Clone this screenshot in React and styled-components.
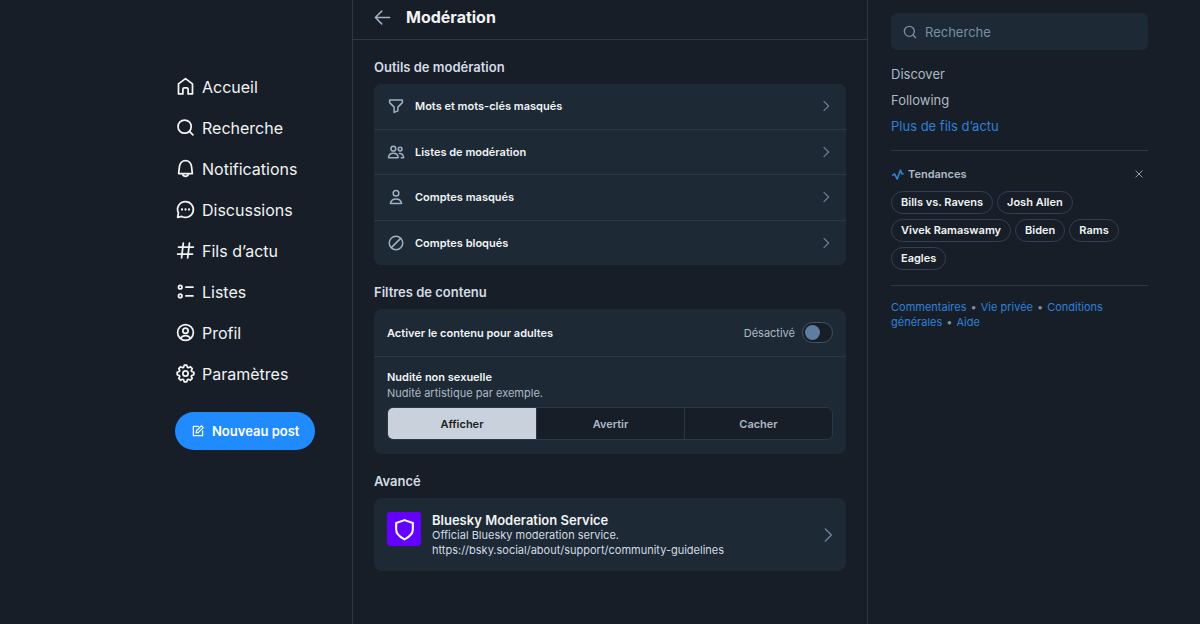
import React, { useState } from "react";
import styled, { createGlobalStyle, ThemeProvider } from "styled-components";

const theme = {
  bg: "#171e27",
  card: "#1d2934",
  line: "#2b3847",
  text: "#f1f3f5",
  textHigh: "#d3dbe5",
  textMedium: "#aeb9c6",
  textLow: "#788ea5",
  icon: "#9fb0c2",
  chevron: "#6b7f95",
  primary: "#208bfe",
  link: "#2f80d8",
};

const GlobalStyle = createGlobalStyle`
  *, *::before, *::after { box-sizing: border-box; }
  body {
    margin: 0;
    background: ${theme.bg};
    color: ${theme.text};
    font-family: Inter, "Liberation Sans", sans-serif;
    font-size: 13px;
  }
  a { color: inherit; text-decoration: none; }
  button, input { font: inherit; color: inherit; }
  h1, h2, h3, p { margin: 0; }
`;

/* ---------- icons ---------- */

const Svg = styled.svg`
  display: block;
  flex: none;
  width: ${(p) => p.$size}px;
  height: ${(p) => p.$size}px;
  fill: none;
  stroke: currentColor;
  stroke-width: ${(p) => p.$weight || 2};
  stroke-linejoin: round;
  stroke-linecap: round;
`;

const shapes = {
  home: <path d="M4 9 12 3l8 6V20.500h-5V15a1.500 1.500 0 0 0-1.500-1.500h-3A1.500 1.500 0 0 0 9 15v5.500H4Z" />,
  search: (
    <>
      <circle cx="11" cy="11" r="7.500" />
      <path d="m16.500 16.500 4 4" />
    </>
  ),
  bell: (
    <>
      <path d="M4.200 17.800 5 10.400C5.400 6 8.300 3 12 3s6.600 3 7 7.400l.8 7.400Z" />
      <path d="M8.500 18.300c.6 1.700 1.900 2.600 3.500 2.600s2.900-.9 3.500-2.600" />
    </>
  ),
  chat: (
    <>
      <path d="M12 3a9 9 0 1 1-4.300 16.900L3 21l.9-5A9 9 0 0 1 12 3Z" />
      <g fill="currentColor" stroke="none">
        <circle cx="8" cy="12" r="1.300" />
        <circle cx="12" cy="12" r="1.300" />
        <circle cx="16" cy="12" r="1.300" />
      </g>
    </>
  ),
  hash: <path d="M9.500 3.500 7.500 20.500M16.500 3.500l-2 17M4 8h17M3 16h17" />,
  list: (
    <>
      <circle cx="6" cy="7" r="2" />
      <circle cx="6" cy="17" r="2" />
      <path d="M12.500 7H20.500M12.500 17H20.500" />
    </>
  ),
  profile: (
    <>
      <circle cx="12" cy="12" r="9" />
      <circle cx="12" cy="10" r="3" />
      <path d="M6.500 18.500c1.200-2 3.100-3 5.500-3s4.300 1 5.500 3" />
    </>
  ),
  gear: (
    <>
      <path d="M10.600 2.500h2.800l.9 2.500 1 .4 2.400-1.100 2 2-1.100 2.400.4 1 2.500.9v2.800l-2.500.9-.4 1 1.100 2.400-2 2-2.400-1.100-1 .4-.9 2.500h-2.800l-.9-2.500-1-.4-2.400 1.100-2-2 1.100-2.400-.4-1-2.500-.9v-2.800l2.500-.9.4-1-1.100-2.400 2-2 2.400 1.100 1-.4Z" />
      <circle cx="12" cy="12" r="3" />
    </>
  ),
  compose: (
    <>
      <path d="M12.500 4H4v16h16v-8.500" />
      <path d="M17.800 3 21 6.200 12.400 14.800 8.700 15.300 9.200 11.600Z" />
    </>
  ),
  back: <path d="M21 12H3.500M11 4l-8 8 8 8" />,
  filter: <path d="M3.500 4h17v3.500L14.500 13.500V18.500L9.500 20.500V13.500L3.500 7.500Z" />,
  people: (
    <>
      <circle cx="8.500" cy="7.500" r="3.200" />
      <circle cx="17.500" cy="8" r="2.500" />
      <path d="M2 19.500c.3-4 2.900-6 6.500-6s6.200 2 6.500 6Z" />
      <path d="M16.500 14c3-.3 5.200 1.600 5.800 5.500H19" />
    </>
  ),
  person: (
    <>
      <circle cx="12" cy="7" r="3.800" />
      <path d="M4.500 20.500c.7-4 3.500-6 7.500-6s6.800 2 7.500 6Z" />
    </>
  ),
  block: (
    <>
      <circle cx="12" cy="12" r="9" />
      <path d="m5.800 18.200 12.400-12.400" />
    </>
  ),
  chevron: <path d="m8.500 4 8 8-8 8" />,
  close: <path d="m4.500 4.500 15 15M19.500 4.500l-15 15" />,
  trend: <path d="M3 13.200 6.800 11.200 11.500 20.500 17.300 4l2.900 7 1.800-.5" />,
  shield: <path d="M12 3 20 5.800V12c0 4.500-3 7-8 9.500C7 19 4 16.500 4 12V5.800Z" />,
};

const Icon = ({ name, size, weight }) => (
  <Svg viewBox="0 0 24 24" $size={size} $weight={weight} aria-hidden="true">
    {shapes[name]}
  </Svg>
);

/* ---------- page frame ---------- */

const Page = styled.div`
  display: grid;
  grid-template-columns: 1fr minmax(0, 516px) 1fr;
  min-height: 100vh;
  padding-left: 20px;
`;

const Sidebar = styled.nav`
  justify-self: end;
  width: 177px;
  padding-top: 66px;
`;

const NavLink = styled.a`
  display: flex;
  align-items: center;
  gap: 6px;
  height: 41px;
  font-size: 16px;
  line-height: 20px;
`;

const ComposeButton = styled.button`
  display: flex;
  align-items: center;
  gap: 7px;
  height: 38px;
  margin-top: 18px;
  padding: 0 16px;
  border: 0;
  border-radius: 19px;
  background: ${(p) => p.theme.primary};
  color: #fff;
  font-size: 13px;
  font-weight: 600;
`;

const Main = styled.main`
  border: solid ${(p) => p.theme.line};
  border-width: 0 1px;
`;

const Header = styled.header`
  display: flex;
  align-items: center;
  gap: 14px;
  padding: 6px 20px 10px;
  border-bottom: 1px solid ${(p) => p.theme.line};
`;

const BackButton = styled.button`
  display: flex;
  padding: 0;
  border: 0;
  background: none;
  color: ${(p) => p.theme.icon};
`;

const Title = styled.h1`
  font-size: 16px;
  font-weight: 700;
  line-height: 23px;
`;

const Content = styled.div`
  display: flex;
  flex-direction: column;
  gap: 18px;
  padding: 18px 21px;
`;

const SectionTitle = styled.h2`
  margin-bottom: 7px;
  color: ${(p) => p.theme.textHigh};
  font-size: 13px;
  font-weight: 600;
  line-height: 19px;
`;

const Card = styled.div`
  overflow: hidden;
  border-radius: 8px;
  background: ${(p) => p.theme.card};
`;

const ToolList = styled(Card)`
  display: grid;
  grid-auto-rows: 1fr;
  gap: 1px;
  min-height: 181px;
  background: ${(p) => p.theme.line};
`;

const ToolRow = styled.a`
  display: flex;
  align-items: center;
  gap: 10px;
  padding: 0 13px;
  background: ${(p) => p.theme.card};
  color: ${(p) => p.theme.icon};
`;

const RowLabel = styled.span`
  flex: 1;
  display: block;
  color: ${(p) => p.theme.text};
  font-size: 11px;
  font-weight: 600;
  line-height: 16px;
`;

const Chevron = styled.span`
  color: ${(p) => p.theme.chevron};
`;

const AdultRow = styled.label`
  display: flex;
  align-items: center;
  gap: 7px;
  padding: 13px;
  border-bottom: 1px solid ${(p) => p.theme.line};
`;

const State = styled.span`
  color: ${(p) => p.theme.textMedium};
  font-size: 11px;
  line-height: 16px;
`;

const Switch = styled.input`
  appearance: none;
  display: flex;
  align-items: center;
  width: 31px;
  height: 21px;
  margin: 0;
  padding: 0 2px;
  border: 1px solid #435367;
  border-radius: 11px;
  background: ${(p) => p.theme.bg};

  &::before {
    content: "";
    width: 15px;
    height: 15px;
    border-radius: 50%;
    background: #5f7d9f;
  }

  &:checked {
    justify-content: flex-end;
  }
`;

const NudityBlock = styled.fieldset`
  margin: 0;
  padding: 12px 13px 14px;
  border: 0;
`;

const Hint = styled.p`
  margin-bottom: 6px;
  color: ${(p) => p.theme.textMedium};
  font-size: 11px;
  line-height: 16px;
`;

const Segments = styled.div`
  display: grid;
  grid-template-columns: repeat(3, 1fr);
  overflow: hidden;
  border: 1px solid ${(p) => p.theme.line};
  border-radius: 6px;
  background: ${(p) => p.theme.bg};
`;

const Segment = styled.label`
  display: grid;
  place-items: center;
  height: 31px;
  color: ${(p) => p.theme.textMedium};
  font-size: 11px;
  font-weight: 600;

  & + & {
    border-left: 1px solid ${(p) => p.theme.line};
  }

  &:has(input:checked) {
    background: #c9d1dc;
    color: ${(p) => p.theme.bg};
  }

  input {
    appearance: none;
    position: absolute;
    margin: 0;
  }
`;

const Service = styled.a`
  display: flex;
  align-items: center;
  gap: 11px;
  padding: 14px 9px 13px 13px;
`;

const ServiceLogo = styled.span`
  display: grid;
  place-items: center;
  align-self: flex-start;
  width: 34px;
  height: 34px;
  border-radius: 3px;
  background: #6400ff;
  color: #fff;
`;

const ServiceText = styled.div`
  flex: 1;
  color: ${(p) => p.theme.textHigh};
  font-size: 11px;
  line-height: 15px;
`;

const ServiceName = styled.h3`
  color: ${(p) => p.theme.text};
  font-size: 13px;
  font-weight: 600;
  line-height: 16px;
`;

/* ---------- right column ---------- */

const Aside = styled.aside`
  width: 280px;
  padding: 13px 0 0 23px;
`;

const SearchBox = styled.label`
  display: flex;
  align-items: center;
  gap: 7px;
  height: 37px;
  padding: 0 11px;
  border-radius: 6px;
  background: ${(p) => p.theme.card};
  color: ${(p) => p.theme.textLow};
`;

const SearchInput = styled.input`
  flex: 1;
  min-width: 0;
  padding: 0;
  border: 0;
  outline: 0;
  background: none;
  font-size: 13px;

  &::placeholder {
    color: ${(p) => p.theme.textLow};
    opacity: 1;
  }
`;

const Feeds = styled.div`
  display: flex;
  flex-direction: column;
  align-items: flex-start;
  gap: 10px;
  padding: 16px 0;
  border-bottom: 1px solid ${(p) => p.theme.line};
`;

const FeedLink = styled.a`
  color: ${(p) => (p.$accent ? p.theme.link : p.theme.textMedium)};
  font-size: 13px;
  line-height: 16px;
`;

const Trends = styled.section`
  padding: 14px 0 15px;
  border-bottom: 1px solid ${(p) => p.theme.line};
`;

const TrendsHead = styled.div`
  display: flex;
  align-items: center;
  gap: 4px;
  margin-bottom: 8px;
  color: ${(p) => p.theme.link};
`;

const TrendsTitle = styled.h2`
  flex: 1;
  color: ${(p) => p.theme.textMedium};
  font-size: 11px;
  font-weight: 600;
  line-height: 18px;
`;

const CloseButton = styled.button`
  display: flex;
  padding: 4px;
  border: 0;
  background: none;
  color: ${(p) => p.theme.textMedium};
`;

const Chips = styled.div`
  display: flex;
  flex-wrap: wrap;
  gap: 5px 4px;
`;

const Chip = styled.a`
  padding: 0 9px;
  border: 1px solid #314052;
  border-radius: 12px;
  font-size: 11px;
  font-weight: 600;
  line-height: 21px;
`;

const Footer = styled.footer`
  padding-top: 14px;
  color: ${(p) => p.theme.textLow};
  font-size: 11px;
  line-height: 15px;

  a {
    color: ${(p) => p.theme.link};
  }
`;

const Dot = styled.span`
  margin: 0 4px;
`;

const navItems = [
  ["home", "Accueil"],
  ["search", "Recherche"],
  ["bell", "Notifications"],
  ["chat", "Discussions"],
  ["hash", "Fils d’actu"],
  ["list", "Listes"],
  ["profile", "Profil"],
  ["gear", "Paramètres"],
];

const tools = [
  ["filter", "Mots et mots-clés masqués"],
  ["people", "Listes de modération"],
  ["person", "Comptes masqués"],
  ["block", "Comptes bloqués"],
];

const topics = ["Bills vs. Ravens", "Josh Allen", "Vivek Ramaswamy", "Biden", "Rams", "Eagles"];

const footerLinks = ["Commentaires", "Vie privée", "Conditions générales", "Aide"];

export default function App() {
  const [adult, setAdult] = useState(false);
  const [nudity, setNudity] = useState("Afficher");

  return (
    <ThemeProvider theme={theme}>
      <GlobalStyle />
      <Page>
        <Sidebar>
          {navItems.map(([icon, label]) => (
            <NavLink href="#" key={label}>
              <Icon name={icon} size={21} />
              {label}
            </NavLink>
          ))}
          <ComposeButton type="button">
            <Icon name="compose" size={14} />
            Nouveau post
          </ComposeButton>
        </Sidebar>

        <Main>
          <Header>
            <BackButton type="button" aria-label="Retour">
              <Icon name="back" size={19} />
            </BackButton>
            <Title>Modération</Title>
          </Header>
          <Content>
            <section>
              <SectionTitle>Outils de modération</SectionTitle>
              <ToolList>
                {tools.map(([icon, label]) => (
                  <ToolRow href="#" key={label}>
                    <Icon name={icon} size={18} />
                    <RowLabel>{label}</RowLabel>
                    <Chevron>
                      <Icon name="chevron" size={14} />
                    </Chevron>
                  </ToolRow>
                ))}
              </ToolList>
            </section>

            <section>
              <SectionTitle>Filtres de contenu</SectionTitle>
              <Card>
                <AdultRow>
                  <RowLabel>Activer le contenu pour adultes</RowLabel>
                  <State>{adult ? "Activé" : "Désactivé"}</State>
                  <Switch
                    type="checkbox"
                    role="switch"
                    checked={adult}
                    onChange={(e) => setAdult(e.target.checked)}
                  />
                </AdultRow>
                <NudityBlock aria-label="Nudité non sexuelle">
                  <RowLabel>Nudité non sexuelle</RowLabel>
                  <Hint>Nudité artistique par exemple.</Hint>
                  <Segments>
                    {["Afficher", "Avertir", "Cacher"].map((option) => (
                      <Segment key={option}>
                        <input
                          type="radio"
                          name="nudity"
                          checked={nudity === option}
                          onChange={() => setNudity(option)}
                        />
                        {option}
                      </Segment>
                    ))}
                  </Segments>
                </NudityBlock>
              </Card>
            </section>

            <section>
              <SectionTitle>Avancé</SectionTitle>
              <Card>
                <Service href="#">
                  <ServiceLogo>
                    <Icon name="shield" size={25} />
                  </ServiceLogo>
                  <ServiceText>
                    <ServiceName>Bluesky Moderation Service</ServiceName>
                    <p>Official Bluesky moderation service.</p>
                    <p>https://bsky.social/about/support/community-guidelines</p>
                  </ServiceText>
                  <Chevron>
                    <Icon name="chevron" size={18} />
                  </Chevron>
                </Service>
              </Card>
            </section>
          </Content>
        </Main>

        <Aside>
          <SearchBox>
            <Icon name="search" size={16} />
            <SearchInput type="text" placeholder="Recherche" aria-label="Recherche" />
          </SearchBox>
          <Feeds>
            <FeedLink href="#">Discover</FeedLink>
            <FeedLink href="#">Following</FeedLink>
            <FeedLink href="#" $accent>Plus de fils d’actu</FeedLink>
          </Feeds>
          <Trends>
            <TrendsHead>
              <Icon name="trend" size={13} weight={3} />
              <TrendsTitle>Tendances</TrendsTitle>
              <CloseButton type="button" aria-label="Masquer les tendances">
                <Icon name="close" size={10} />
              </CloseButton>
            </TrendsHead>
            <Chips>
              {topics.map((topic) => (
                <Chip href="#" key={topic}>{topic}</Chip>
              ))}
            </Chips>
          </Trends>
          <Footer>
            {footerLinks.map((label, i) => (
              <React.Fragment key={label}>
                {i > 0 && <Dot>•</Dot>}
                <a href="#">{label}</a>
              </React.Fragment>
            ))}
          </Footer>
        </Aside>
      </Page>
    </ThemeProvider>
  );
}
